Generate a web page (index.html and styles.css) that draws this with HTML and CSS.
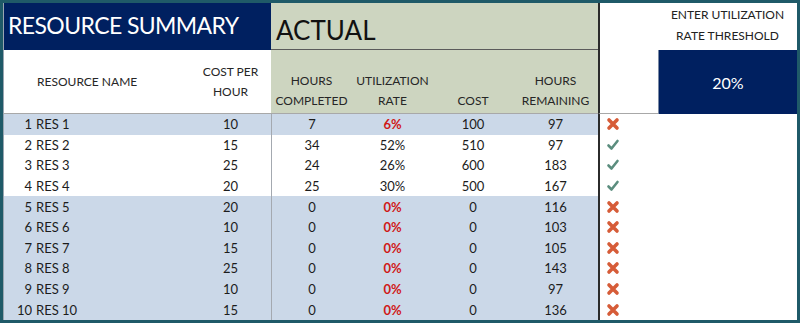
FILE: index.html
```html
<!DOCTYPE html>
<html>
<head>
<meta charset="utf-8">
<link rel="stylesheet" href="styles.css">
</head>
<body>
<div class="sheet">
  <div class="title">RESOURCE SUMMARY</div>
  <div class="actual">ACTUAL</div>
  <div class="gap-top"></div>
  <div class="thr-label">ENTER UTILIZATION<br>RATE THRESHOLD</div>

  <div class="h-name">RESOURCE NAME</div>
  <div class="h-cost">COST PER<br>HOUR</div>
  <div class="h-act">HOURS<br>COMPLETED</div>
  <div class="h-act">UTILIZATION<br>RATE</div>
  <div class="h-act">COST</div>
  <div class="h-act last">HOURS<br>REMAINING</div>
  <div class="h-gap"></div>
  <div class="thr-val">20%</div>

  <div class="row blue"><div class="c num">1</div><div class="c nm">RES 1</div><div class="c ctr">10</div><div class="c ctr first">7</div><div class="c ctr red">6%</div><div class="c ctr">100</div><div class="c ctr">97</div><div class="ic"><svg class="x" viewBox="0 0 14 14"><path d="M3 3L11 11M11 3L3 11"/></svg></div><div class="blank"></div></div>
  <div class="row"><div class="c num">2</div><div class="c nm">RES 2</div><div class="c ctr">15</div><div class="c ctr first">34</div><div class="c ctr">52%</div><div class="c ctr">510</div><div class="c ctr">97</div><div class="ic"><svg class="ok" viewBox="0 0 14 14"><path d="M2.5 7.5L5.5 10.5L11.5 3"/></svg></div><div class="blank"></div></div>
  <div class="row"><div class="c num">3</div><div class="c nm">RES 3</div><div class="c ctr">25</div><div class="c ctr first">24</div><div class="c ctr">26%</div><div class="c ctr">600</div><div class="c ctr">183</div><div class="ic"><svg class="ok" viewBox="0 0 14 14"><path d="M2.5 7.5L5.5 10.5L11.5 3"/></svg></div><div class="blank"></div></div>
  <div class="row"><div class="c num">4</div><div class="c nm">RES 4</div><div class="c ctr">20</div><div class="c ctr first">25</div><div class="c ctr">30%</div><div class="c ctr">500</div><div class="c ctr">167</div><div class="ic"><svg class="ok" viewBox="0 0 14 14"><path d="M2.5 7.5L5.5 10.5L11.5 3"/></svg></div><div class="blank"></div></div>
  <div class="row blue"><div class="c num">5</div><div class="c nm">RES 5</div><div class="c ctr">20</div><div class="c ctr first">0</div><div class="c ctr red">0%</div><div class="c ctr">0</div><div class="c ctr">116</div><div class="ic"><svg class="x" viewBox="0 0 14 14"><path d="M3 3L11 11M11 3L3 11"/></svg></div><div class="blank"></div></div>
  <div class="row blue"><div class="c num">6</div><div class="c nm">RES 6</div><div class="c ctr">10</div><div class="c ctr first">0</div><div class="c ctr red">0%</div><div class="c ctr">0</div><div class="c ctr">103</div><div class="ic"><svg class="x" viewBox="0 0 14 14"><path d="M3 3L11 11M11 3L3 11"/></svg></div><div class="blank"></div></div>
  <div class="row blue"><div class="c num">7</div><div class="c nm">RES 7</div><div class="c ctr">15</div><div class="c ctr first">0</div><div class="c ctr red">0%</div><div class="c ctr">0</div><div class="c ctr">105</div><div class="ic"><svg class="x" viewBox="0 0 14 14"><path d="M3 3L11 11M11 3L3 11"/></svg></div><div class="blank"></div></div>
  <div class="row blue"><div class="c num">8</div><div class="c nm">RES 8</div><div class="c ctr">25</div><div class="c ctr first">0</div><div class="c ctr red">0%</div><div class="c ctr">0</div><div class="c ctr">143</div><div class="ic"><svg class="x" viewBox="0 0 14 14"><path d="M3 3L11 11M11 3L3 11"/></svg></div><div class="blank"></div></div>
  <div class="row blue"><div class="c num">9</div><div class="c nm">RES 9</div><div class="c ctr">10</div><div class="c ctr first">0</div><div class="c ctr red">0%</div><div class="c ctr">0</div><div class="c ctr">97</div><div class="ic"><svg class="x" viewBox="0 0 14 14"><path d="M3 3L11 11M11 3L3 11"/></svg></div><div class="blank"></div></div>
  <div class="row blue"><div class="c num">10</div><div class="c nm">RES 10</div><div class="c ctr">15</div><div class="c ctr first">0</div><div class="c ctr red">0%</div><div class="c ctr">0</div><div class="c ctr">136</div><div class="ic"><svg class="x" viewBox="0 0 14 14"><path d="M3 3L11 11M11 3L3 11"/></svg></div><div class="blank"></div></div>
</div>
</body>
</html>
```

FILE: styles.css
```css
* { box-sizing: border-box; }
html, body { margin: 0; padding: 0; background: #fff; }
body { font-family: Lato, "Open Sans", sans-serif; color: #1c1c1c; }

.sheet {
  width: 800px;
  height: 323px;
  border: 3px solid #1f5a68;
  display: grid;
  grid-template-columns: 29px 158px 81px 81px 81px 80px 85px 60px 139px;
  grid-template-rows: 47px 64px repeat(10, 1fr);
  font-size: 13px;
}

.title {
  grid-column: 1 / 4;
  background: #002060;
  color: #fff;
  font-size: 23px;
  letter-spacing: -0.6px;
  white-space: nowrap;
  padding-left: 4px;
  display: flex;
  align-items: center;
  padding-bottom: 4px;
  border-left: 1px solid #9aa5b0;
}
.actual {
  grid-column: 4 / 8;
  background: #cdd5c0;
  border-bottom: 1px solid #5b5b5b;
  font-size: 26px;
  color: #111;
  display: flex;
  align-items: flex-end;
  padding-left: 5px;
  padding-bottom: 3px;
}
.gap-top {
  grid-column: 8;
  border-left: 2px solid #2b2b2b;
}
.thr-label {
  grid-column: 9;
  text-align: center;
  font-size: 12px;
  line-height: 21px;
  padding-top: 1px;
  color: #222;
}

.h-name, .h-cost, .h-act, .h-gap {
  border-bottom: 1px solid #a8a8a8;
  font-size: 12px;
  line-height: 20px;
  color: #262626;
}
.h-name {
  grid-column: 1 / 3;
  display: flex;
  align-items: center;
  padding-left: 33px;
  border-left: 1px solid #9aa5b0;
}
.h-cost {
  display: flex;
  align-items: center;
  justify-content: center;
  text-align: center;
}
.h-act {
  background: #cdd5c0;
  display: flex;
  align-items: flex-end;
  justify-content: center;
  text-align: center;
  padding-bottom: 2px;
}
.h-gap { border-left: 2px solid #2b2b2b; }
.thr-val {
  background: #002060;
  color: #fff;
  font-size: 16px;
  display: flex;
  align-items: center;
  justify-content: center;
  border-left: 1px solid #7b8aa5;
}

.row { display: contents; }
.c {
  display: flex;
  align-items: center;
  white-space: nowrap;
  background: #fff;
}
.row.blue .c { background: #cbd8e8; }
.c.num { justify-content: flex-end; border-left: 1px solid #9aa5b0; }
.c.nm { padding-left: 4px; }
.c.ctr { justify-content: center; }
.c.first { border-left: 1px solid #a4a9b0; }
.c.red { color: #d01818; font-weight: 700; }
.ic {
  border-left: 2px solid #2b2b2b;
  display: flex;
  align-items: center;
  padding-left: 6px;
}
.ic svg { width: 14px; height: 14px; }
.x path { stroke: #d65c38; stroke-width: 3.6; stroke-linecap: round; fill: none; }
.ok path { stroke: #5b8d7e; stroke-width: 2.6; stroke-linecap: round; stroke-linejoin: round; fill: none; }
.blank { background: #fff; }
```
